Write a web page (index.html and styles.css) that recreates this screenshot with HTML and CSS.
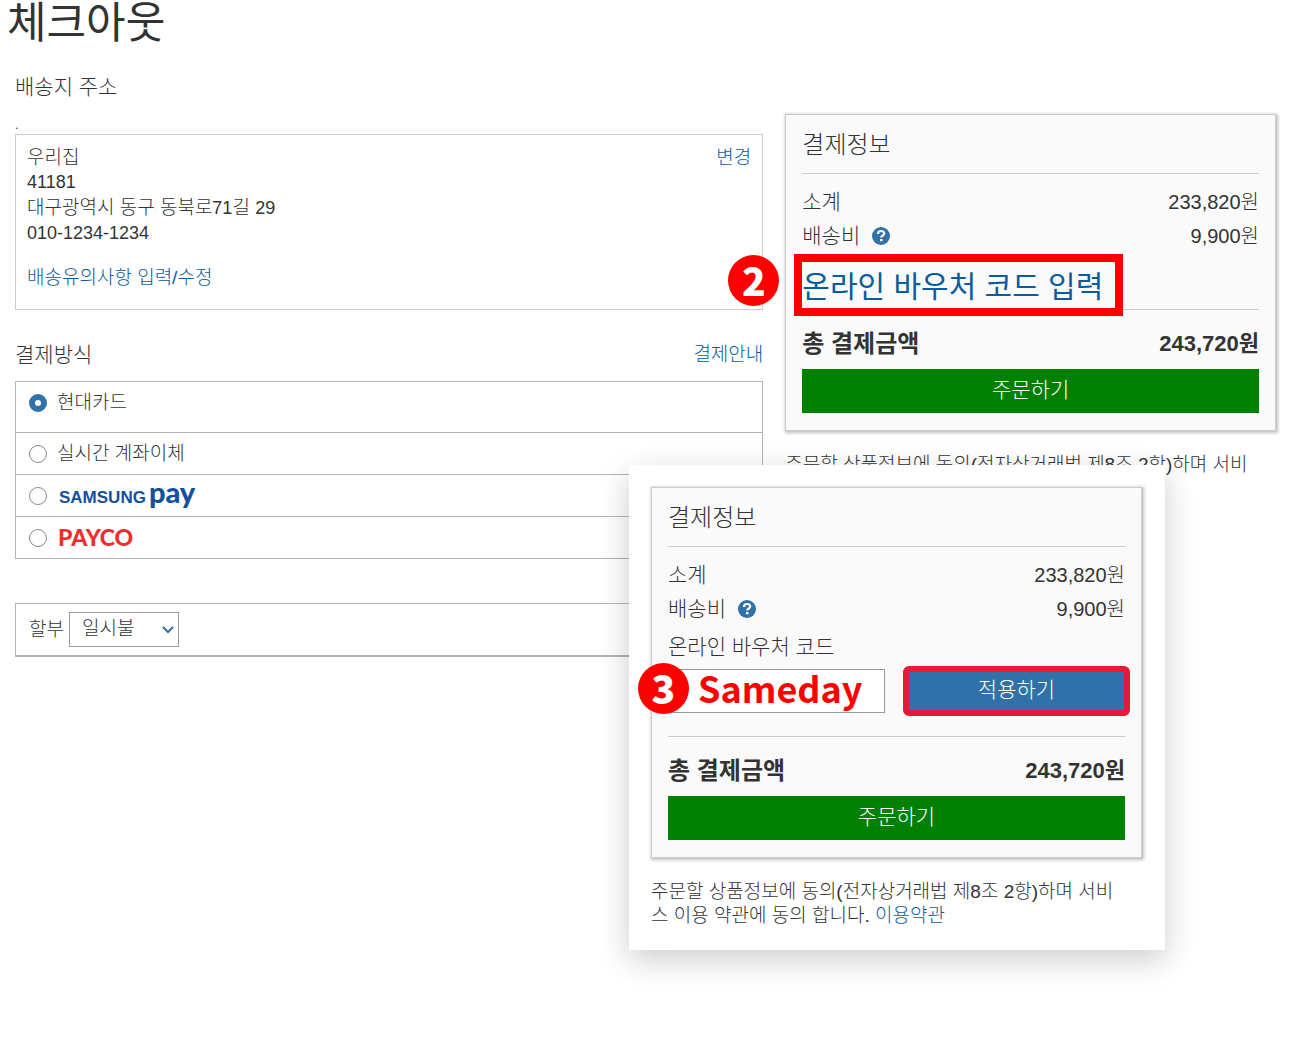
FILE: index.html
```html
<!DOCTYPE html>
<html lang="ko">
<head>
    <meta charset="UTF-8">
    <title>체크아웃</title>
    <link rel="stylesheet" href="styles.css">
</head>
<body>
    <h1 class="title">체크아웃</h1>
    <div class="checkout">
        <div class="main">
            <h2 class="sub_title">배송지 주소</h2>
            <div class="dot">.</div>
            <div class="address">
                <div class="address_text">
                    <p>우리집</p>
                    <p class="num">41181</p>
                    <p>대구광역시 동구 동북로<span class="num">71</span>길 <span class="num">29</span></p>
                    <p class="num">010-1234-1234</p>
                    <a href="#" class="memo">배송유의사항 입력/수정</a>
                </div>
                <a href="#">변경</a>
            </div>
            <div class="pay_head">
                <h2 class="sub_title">결제방식</h2>
                <a href="#">결제안내</a>
            </div>
            <div class="pay_list">
                <label class="pay_item first"><input type="radio" name="pay" checked><span>현대카드</span></label>
                <label class="pay_item"><input type="radio" name="pay"><span>실시간 계좌이체</span></label>
                <label class="pay_item"><input type="radio" name="pay"><span class="samsung">SAMSUNG<b>pay</b></span></label>
                <label class="pay_item"><input type="radio" name="pay"><span class="payco">PAYCO</span></label>
            </div>
            <div class="install">
                <label for="month">할부</label>
                <div class="select_wrap">
                    <select id="month">
                        <option>일시불</option>
                    </select>
                    <svg class="chevron" width="12" height="8" viewBox="0 0 12 8"><path d="M1 1l5 5 5-5" fill="none" stroke="#2f71a8" stroke-width="2"/></svg>
                </div>
            </div>
        </div>

        <div class="side">
            <div class="card">
                <h2 class="card_title">결제정보</h2>
                <div class="rows">
                    <div class="row"><span>소계</span><span class="price">233,820원</span></div>
                    <div class="row">
                        <span>배송비</span>
                        <svg class="help" width="18" height="18" viewBox="0 0 18 18"><circle cx="9" cy="9" r="9" fill="#2f71a8"/><path d="M6 7c0-4 6.200-3.800 6.200-.5 0 2-3 2-3 4" fill="none" stroke="#fff" stroke-width="2.200"/><path d="M8 12h2.500v2.300h-2.500z" fill="#fff"/></svg>
                        <span class="price">9,900원</span>
                    </div>
                </div>
                <div class="voucher">
                    <span class="badge badge_two">2</span>
                    <a href="#" class="voucher_link">온라인 바우처 코드 입력</a>
                </div>
                <div class="total"><span>총 결제금액</span><span class="total_price">243,720원</span></div>
                <button type="button" class="order">주문하기</button>
            </div>
            <p class="terms">주문할 상품정보에 동의(전자상거래법 제8조 2항)하며 서비</p>
        </div>
    </div>

    <!-- 바우처 입력 팝업 -->
    <div class="popup">
        <div class="card">
            <h2 class="card_title">결제정보</h2>
            <div class="rows">
                <div class="row"><span>소계</span><span class="price">233,820원</span></div>
                <div class="row">
                    <span>배송비</span>
                    <svg class="help" width="18" height="18" viewBox="0 0 18 18"><circle cx="9" cy="9" r="9" fill="#2f71a8"/><path d="M6 7c0-4 6.200-3.800 6.200-.5 0 2-3 2-3 4" fill="none" stroke="#fff" stroke-width="2.200"/><path d="M8 12h2.500v2.300h-2.500z" fill="#fff"/></svg>
                    <span class="price">9,900원</span>
                </div>
            </div>
            <label for="code" class="code_label">온라인 바우처 코드</label>
            <div class="code_form">
                <input type="text" id="code" class="code" value="Sameday">
                <button type="button" class="apply">적용하기</button>
                <span class="badge badge_three">3</span>
            </div>
            <div class="total"><span>총 결제금액</span><span class="total_price">243,720원</span></div>
            <button type="button" class="order">주문하기</button>
        </div>
        <p class="terms">주문할 상품정보에 동의(전자상거래법 제8조 2항)하며 서비스 이용 약관에 동의 합니다. <a href="#">이용약관</a></p>
    </div>
</body>
</html>
```

FILE: styles.css
```css
* {
    margin: 0;
    padding: 0;
    box-sizing: border-box;
}
body {
    position: relative;
    min-height: 100vh;
    font-family: "Liberation Sans", "Noto Sans CJK KR", sans-serif;
    font-size: 19px;
    font-weight: 300;
    line-height: 25px;
    color: #333;
    background: #fff;
}
a {
    color: #0a5c9c;
    text-decoration: none;
}
button, input, select {
    font-family: inherit;
    font-weight: inherit;
}
.title {
    padding-left: 7px;
    font-size: 43px;
    font-weight: 400;
    line-height: 46px;
}
.checkout {
    display: grid;
    grid-template-columns: 61fr 40fr;
    column-gap: 22px;
    padding: 0 15px;
}
.main {
    padding-top: 28px;
}
.sub_title {
    font-size: 21px;
    font-weight: 300;
    line-height: 25px;
}
.dot {
    height: 35px;
    padding-top: 16px;
    font-size: 12px;
    line-height: 20px;
}
.address {
    display: flex;
    justify-content: space-between;
    padding: 10px 11px 19px;
    border: 1px solid #ccc;
}
.num {
    font-size: 18px;
}
.memo {
    display: block;
    margin-top: 19px;
}
.pay_head {
    display: flex;
    justify-content: space-between;
    padding: 32px 0 14px;
}
.pay_list {
    border: 1px solid #b3b3b3;
}
.pay_item {
    display: flex;
    align-items: center;
    gap: 10px;
    padding: 8px 13px;
    border-top: 1px solid #b3b3b3;
}
.pay_item.first {
    padding-bottom: 17px;
    border-top: none;
}
.pay_item input {
    appearance: none;
    width: 18px;
    height: 18px;
    border: 1px solid #888;
    border-radius: 50%;
    background: #fff;
}
.pay_item input:checked {
    border: 6px solid #2f71a8;
}
.samsung {
    display: flex;
    align-items: baseline;
    gap: 3px;
    height: 25px;
    padding-left: 2px;
    font-size: 17px;
    font-weight: bold;
    line-height: 23px;
    color: #14509b;
}
.samsung b {
    font-family: Lato, sans-serif;
    font-size: 29px;
    line-height: 18px;
}
.payco {
    padding-left: 1px;
    font-family: Lato, sans-serif;
    font-size: 23px;
    font-weight: 900;
    color: #ee2e2e;
}
.install {
    display: flex;
    align-items: center;
    gap: 5px;
    margin-top: 44px;
    padding: 8px 13px;
    border: 1px solid #b3b3b3;
    border-bottom-width: 2px;
}
.select_wrap {
    position: relative;
}
.select_wrap select {
    appearance: none;
    display: block;
    width: 110px;
    height: 35px;
    padding: 0 12px 2px;
    border: 1px solid #999;
    background: #fff;
    font-size: 19px;
    color: #333;
}
.chevron {
    position: absolute;
    right: 5px;
    top: 14px;
}
.side {
    padding-top: 68px;
}
.card {
    padding: 0 16px 17px;
    border: 1px solid #ccc;
    background: #fafafa;
    box-shadow: 1px 1px 3px 1px rgba(0,0,0,0.25);
}
.card_title {
    padding-top: 2px;
    font-size: 24px;
    font-weight: 300;
    line-height: 56px;
    border-bottom: 1px solid #ccc;
}
.rows {
    padding-top: 11px;
}
.row {
    display: flex;
    align-items: center;
    font-size: 21px;
    line-height: 34px;
}
.price {
    margin-left: auto;
    font-size: 20px;
}
.help {
    margin-left: 12px;
}
.voucher {
    position: relative;
    padding: 9px 0 1px;
}
.voucher_link {
    display: block;
    width: fit-content;
    padding: 4px 12px 0 0;
    outline: 8px solid #f00;
    font-size: 30px;
    font-weight: 400;
    line-height: 42px;
}
.badge {
    position: absolute;
    width: 51px;
    height: 51px;
    border-radius: 50%;
    background: #f00;
    color: #fff;
    font-family: "Noto Sans CJK KR", sans-serif;
    font-size: 39px;
    font-weight: 900;
    line-height: 48px;
    text-align: center;
}
.badge_two {
    left: -74px;
    top: 2px;
}
.badge_three {
    left: -30px;
    top: 3px;
}
.total {
    display: flex;
    justify-content: space-between;
    padding: 17px 0 8px;
    border-top: 1px solid #ccc;
    font-size: 24px;
    font-weight: bold;
    line-height: 34px;
}
.total_price {
    font-size: 22px;
}
.order {
    display: block;
    width: 100%;
    height: 44px;
    padding-bottom: 6px;
    border: none;
    background: #008000;
    color: #fff;
    font-size: 21px;
}
.terms {
    padding: 22px 20px 0 0;
    line-height: 24px;
}
.popup {
    position: absolute;
    right: 126px;
    top: 465px;
    width: 536px;
    padding: 22px 23px 22px 22px;
    background: #fff;
    box-shadow: 0 10px 30px rgba(0,0,0,0.2);
}
.code_label {
    display: block;
    padding-top: 8px;
    font-size: 21px;
    line-height: 26px;
}
.code_form {
    position: relative;
    display: grid;
    grid-template-columns: 1fr 1fr;
    align-items: center;
    column-gap: 23px;
    padding: 9px 0 23px;
}
.code {
    width: 100%;
    height: 44px;
    padding: 0 0 8px 29px;
    border: 1px solid #999;
    background: #fff;
    color: #f00;
    font-family: "Noto Sans CJK KR", sans-serif;
    font-size: 36px;
    font-weight: bold;
}
.apply {
    height: 40px;
    padding-bottom: 6px;
    border: none;
    border-radius: 1px;
    outline: 6px solid #e61937;
    outline-offset: -1px;
    background: #2f71a8;
    color: #fff;
    font-size: 21px;
}
```
